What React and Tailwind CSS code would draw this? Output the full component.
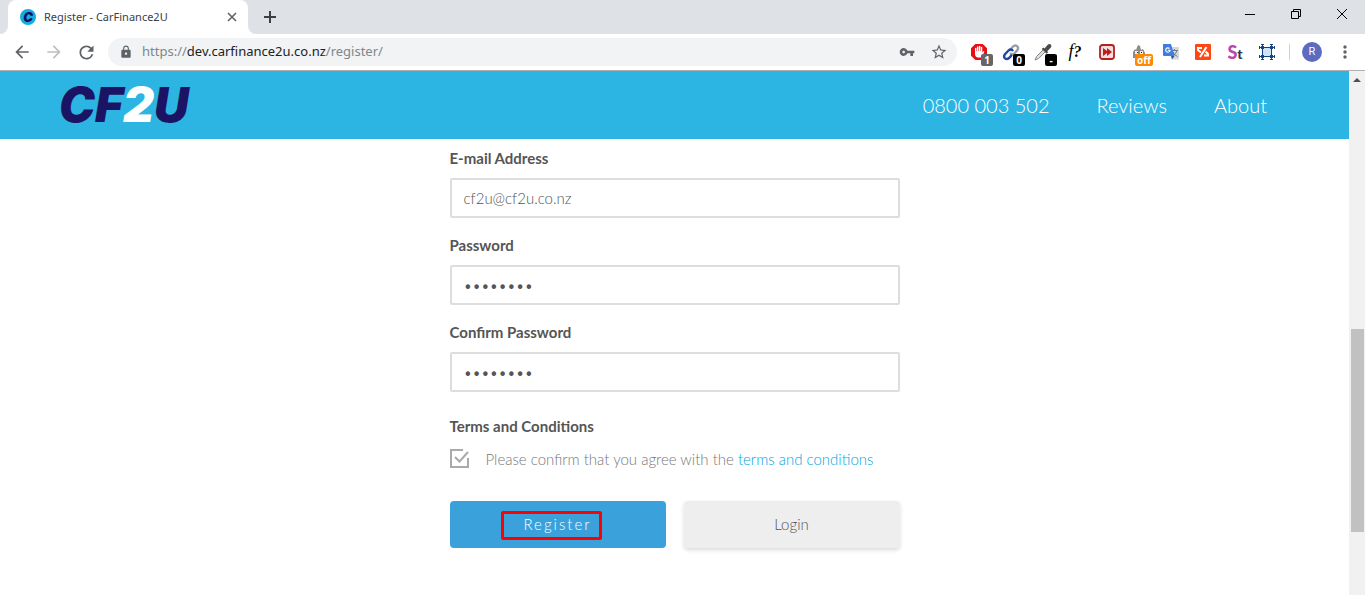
import React from "react";
import { MdArrowBack, MdArrowForward, MdRefresh, MdLock, MdVpnKey, MdStarBorder, MdMoreVert } from "react-icons/md";

function Badge({ className, children }) {
  return (
    <span className={"absolute right-[2px] bottom-0 flex h-3 items-center justify-center rounded-xs text-[10px] font-bold text-white " + className}>
      {children}
    </span>
  );
}

function ToolButton({ label, className = "text-[#5f6368]", children }) {
  return (
    <button type="button" aria-label={label} className={"relative flex h-7 w-8 shrink-0 items-center justify-center " + className}>
      {children}
    </button>
  );
}

function TabStrip() {
  return (
    <div className="flex h-[34px] items-center bg-[#dee1e6] pl-2">
      <div className="relative flex h-full w-60 items-center rounded-t-lg bg-white pr-2 pl-3">
        <svg viewBox="0 0 8 8" className="absolute bottom-0 -left-2 h-2 w-2" aria-hidden="true">
          <path d="M8 0v8H0a8 8 0 0 0 8-8z" fill="#fff" />
        </svg>
        <svg viewBox="0 0 8 8" className="absolute -right-2 bottom-0 h-2 w-2" aria-hidden="true">
          <path d="M0 0v8h8a8 8 0 0 1-8-8z" fill="#fff" />
        </svg>
        <span className="flex h-4 w-4 items-center justify-center rounded-full bg-[#12aee0] font-['Inter'] text-[13px] leading-none font-black text-[#160f5c] italic">
          C
        </span>
        <span className="ml-2 flex-1 text-[11px] whitespace-nowrap text-[#3c4043]">Register - CarFinance2U</span>
        <button type="button" aria-label="Close tab" className="flex h-4 w-4 items-center justify-center">
          <svg viewBox="0 0 10 10" className="h-[10px] w-[10px]" stroke="#5f6368" strokeWidth="1.6">
            <path d="M1 1l8 8M9 1l-8 8" />
          </svg>
        </button>
      </div>
      <button type="button" aria-label="New tab" className="ml-3 flex h-5 w-5 items-center justify-center">
        <svg viewBox="0 0 12 12" className="h-3 w-3" stroke="#3c4043" strokeWidth="2">
          <path d="M6 0v12M0 6h12" />
        </svg>
      </button>
      <div className="ml-auto flex h-7 self-start">
        <button type="button" aria-label="Minimise" className="flex w-[46px] items-center justify-center">
          <svg viewBox="0 0 10 10" className="h-[10px] w-[10px]" shapeRendering="crispEdges">
            <path d="M0 5h10v1H0z" fill="#000" />
          </svg>
        </button>
        <button type="button" aria-label="Restore" className="flex w-[46px] items-center justify-center">
          <svg viewBox="0 0 10 10" className="h-[10px] w-[10px]" fill="none" stroke="#000">
            <path d="M.5 2.500h7v7h-7zM2.500 2.500v-2h7v7h-2" />
          </svg>
        </button>
        <button type="button" aria-label="Close" className="flex w-[46px] items-center justify-center">
          <svg viewBox="0 0 10 10" className="h-[10px] w-[10px]" stroke="#000">
            <path d="M0 0l10 10M10 0L0 10" />
          </svg>
        </button>
      </div>
    </div>
  );
}

function Extensions() {
  return (
    <>
      <ToolButton label="Blocker">
        <svg viewBox="0 0 18 18" className="h-[18px] w-[18px]">
          <path d="M5.300 1h7.400L17 5.300v7.400L12.700 17H5.300L1 12.700V5.300z" fill="#e60f14" />
          <path d="M5 9.500V5.200q.8-.9 1.400 0V8h.5V3.700q.8-.9 1.500 0V8h.5V3.200q.8-.9 1.500 0V8h.5V4.200q.8-.9 1.400 0v5.300l1-1.200q1.200-.3 1.100.5l-2.200 4.400q-.5 1.200-1.700 1.200H7.700Q5 14 5 11z" fill="#fff" />
        </svg>
        <Badge className="w-3 bg-[#666]">1</Badge>
      </ToolButton>
      <ToolButton label="Links">
        <svg viewBox="0 0 18 18" className="h-[18px] w-[18px]" fill="none" strokeLinecap="round" strokeWidth="2.400">
          <path d="M8 7l3-3.500q2-2 4-.4t.4 3.900l-3 3.500q-1.800 1.600-3.600.3" stroke="#9a9ea5" />
          <path d="M10.500 7.300Q8.500 5.500 6.500 7.500l-3.700 4q-1.500 2.300.2 3.800t3.800 0l2.500-2.700" stroke="#2247a5" />
        </svg>
        <Badge className="w-3 bg-black">0</Badge>
      </ToolButton>
      <ToolButton label="Colour picker">
        <svg viewBox="0 0 18 18" className="h-[18px] w-[18px]">
          <path d="M10.500 5.500l3-3.500q1.800-1.700 3.200-.4t0 3.200l-3.500 3.400 1 1-1.600 1.500L7.700 6l1.600-1.500z" fill="#4b4b4b" />
          <path d="M9 7L2.500 13.500 1 17l3.600-1.500L11 9z" fill="#ddd" stroke="#888" />
        </svg>
        <Badge className="w-3 bg-black">-</Badge>
      </ToolButton>
      <ToolButton label="Font finder" className="text-black">
        <span className="font-['Liberation_Serif',serif] text-lg leading-none italic">
          f<span className="text-base font-bold">?</span>
        </span>
      </ToolButton>
      <ToolButton label="Fast forward">
        <svg viewBox="0 0 16 16" className="h-4 w-4">
          <rect x="1" y="1" width="14" height="14" rx="2.500" fill="#f7dedd" stroke="#b3201f" strokeWidth="1.800" />
          <path d="M4 4v8l4-3v3l5-4-5-4v3z" fill="#b3201f" />
        </svg>
      </ToolButton>
      <ToolButton label="Monkey scripts">
        <svg viewBox="0 0 16 16" className="h-4 w-4">
          <path d="M2 8l2-3 1 1 2-5 2 1 1 4 2-1 2 4v5H2z" fill="#8b8b8b" />
          <path d="M4 7h3v3H4zM9 7h3v3H9z" fill="#eee" />
          <path d="M6 8h1v1H6zM10 8h1v1h-1z" fill="#222" />
        </svg>
        <Badge className="w-[18px] bg-[#ff8a00]">off</Badge>
      </ToolButton>
      <ToolButton label="Translate">
        <svg viewBox="0 0 16 16" className="h-4 w-4">
          <path d="M6 3h10v12.500H9z" fill="#d8d8d8" />
          <path d="M8 6.500h7M11.500 5v1.500M14 6.500q-1 3.500-4 5.500M10 8q1 3 4.500 4.500" stroke="#6f7f88" fill="none" />
          <path d="M0 0h8l3.500 12H1q-1 0-1-1z" fill="#3f7de0" />
          <path d="M8 12h3.500L9 15.500z" fill="#2456b5" />
          <path d="M6.500 4.500a2.200 2.200 0 1 0 .6 1.800H4.800" fill="none" stroke="#fff" strokeWidth="1.100" />
        </svg>
      </ToolButton>
      <ToolButton label="Code tools">
        <svg viewBox="0 0 16 16" className="h-4 w-4" fill="none" stroke="#fff" strokeWidth="2">
          <rect width="16" height="16" rx="1" fill="#ff4713" stroke="none" />
          <path d="M7 4H3v2l3 2.500M11.500 3L5 13M10.500 7.500L13 10v1.500H9" />
        </svg>
      </ToolButton>
      <ToolButton label="Styles">
        <span className="flex items-baseline font-['Lato'] leading-none font-black">
          <span className="text-lg text-[#b845b0]">S</span>
          <span className="text-sm text-[#343440]">t</span>
        </span>
      </ToolButton>
      <ToolButton label="Frame">
        <svg viewBox="0 0 16 16" className="h-4 w-4" shapeRendering="crispEdges">
          <path d="M3 3h10v10H3z" fill="#cfe4fb" />
          <path d="M0 3h16v1H0zM0 12h16v1H0zM3 0h1v16H3zM12 0h1v16h-1z" fill="#14437f" />
          <path d="M2 2h3v3H2zM11 2h3v3h-3zM2 11h3v3H2zM11 11h3v3h-3zM0 2h1v3H0zM15 2h1v3h-1zM0 11h1v3H0zM15 11h1v3h-1zM2 0h3v1H2zM11 0h3v1h-3zM2 15h3v1H2zM11 15h3v1h-3z" fill="#14437f" />
        </svg>
      </ToolButton>
    </>
  );
}

function Toolbar() {
  return (
    <div className="flex h-[37px] items-center border-b border-[#b0b0b0] bg-white pr-[9px] pl-[6px]">
      <ToolButton label="Back"><MdArrowBack size={20} /></ToolButton>
      <ToolButton label="Forward" className="text-[#bdbfc2]"><MdArrowForward size={20} /></ToolButton>
      <ToolButton label="Reload"><MdRefresh size={21} /></ToolButton>
      <div className="mx-[6px] flex h-7 flex-1 items-center rounded-full bg-[#f1f3f4] pr-[2px] pl-[11px]">
        <MdLock size={14} className="text-[#5f6368]" />
        <a href="#register" className="ml-[9px] flex-1 text-[13px] whitespace-nowrap text-[#80868b]">
          https://<span className="text-[#202124]">dev.carfinance2u.co.nz</span>/register/
        </a>
        <ToolButton label="Saved passwords"><MdVpnKey size={16} /></ToolButton>
        <ToolButton label="Bookmark"><MdStarBorder size={18} /></ToolButton>
      </div>
      <Extensions />
      <span className="ml-[6px] h-4 w-px bg-[#cfd1d4]" />
      <button type="button" aria-label="Profile" className="flex w-11 items-center justify-center">
        <span className="flex h-5 w-5 items-center justify-center rounded-full bg-[#5c6bc0] font-['Roboto'] text-[11px] text-white">R</span>
      </button>
      <button type="button" aria-label="Menu" className="flex w-[22px] items-center justify-center text-[#5f6368]">
        <MdMoreVert size={20} className="shrink-0" />
      </button>
    </div>
  );
}

function SiteHeader() {
  return (
    <header className="flex h-[68px] items-center justify-between bg-[#2cb5e2] pr-[82px] pl-[59px]">
      <a href="#home" className="font-['Inter'] text-5xl leading-none font-black text-[#1b1464] italic">
        CF<span className="text-white">2</span>U
      </a>
      <nav className="flex gap-[47px] text-xl font-light text-white">
        <a href="tel:0800003502">0800 003 502</a>
        <a href="#reviews">Reviews</a>
        <a href="#about">About</a>
      </nav>
    </header>
  );
}

function Field({ id, label, ...input }) {
  return (
    <div className="flex flex-col gap-2">
      <label htmlFor={id} className="text-[15px] leading-6 font-bold text-[#555]">{label}</label>
      <input
        id={id}
        className="h-10 w-full rounded-xs border-2 border-[#ddd] bg-white px-3 text-[15px] font-light text-[#555] outline-none"
        {...input}
      />
    </div>
  );
}

function RegisterForm() {
  return (
    <form className="mx-auto w-[450px] pt-[7px]" onSubmit={(e) => e.preventDefault()}>
      <div className="flex flex-col gap-[15px]">
        <Field id="email" label="E-mail Address" type="email" defaultValue="cf2u@cf2u.co.nz" />
        <Field id="password" label="Password" type="password" defaultValue="carfin2u" />
        <Field id="confirm" label="Confirm Password" type="password" defaultValue="carfin2u" />
      </div>
      <fieldset className="mt-[22px]">
        <legend className="text-[15px] leading-6 font-bold text-[#555]">Terms and Conditions</legend>
        <div className="mt-[9px] flex items-center text-[15px] leading-6 font-light text-[#777]">
          <span className="relative mr-4 flex h-5 w-5 shrink-0">
            <input id="terms" type="checkbox" defaultChecked className="peer h-5 w-5 appearance-none" />
            <svg viewBox="0 0 20 20" className="pointer-events-none absolute inset-0 h-5 w-5" fill="none" stroke="#aaa" strokeWidth="2">
              <path d="M13 1H1v17h17V9" />
              <path d="M5 8l4.500 4.500L18 3" />
            </svg>
          </span>
          <label htmlFor="terms">
            Please confirm that you agree with the <a href="#terms" className="text-[#00a5dc]">terms and conditions</a>
          </label>
        </div>
      </fieldset>
      <div className="mt-[30px] grid grid-cols-2 gap-[18px] text-[15px] font-light">
        <button type="submit" className="relative h-[47px] rounded-sm bg-[#3ba1da] tracking-[2px] text-white">
          Register
          <span className="absolute top-[10px] left-[51px] h-[29px] w-[101px] rounded-xs border-3 border-[#f00]" />
        </button>
        <button type="button" className="h-[47px] rounded-sm bg-[#eee] text-[#555] shadow-[0_2px_4px_rgba(0,0,0,0.15)]">
          Login
        </button>
      </div>
    </form>
  );
}

function Scrollbar() {
  return (
    <div className="flex w-4 shrink-0 flex-col bg-[#f1f1f1]">
      <button type="button" aria-label="Scroll up" className="flex h-[17px] items-center justify-center">
        <svg viewBox="0 0 8 4" className="h-1 w-2"><path d="M4 0l4 4H0z" fill="#505050" /></svg>
      </button>
      <div className="flex-[241]" />
      <div className="mr-px ml-[2px] flex-[203] bg-[#c1c1c1]" />
      <div className="flex-[63]" />
    </div>
  );
}

export default function App() {
  return (
    <div className="flex min-h-screen flex-col bg-white">
      <div className="font-['Noto_Sans',sans-serif]">
        <TabStrip />
        <Toolbar />
      </div>
      <div className="flex flex-1 font-['Lato',sans-serif]">
        <main className="min-w-0 flex-1">
          <SiteHeader />
          <RegisterForm />
        </main>
        <Scrollbar />
      </div>
    </div>
  );
}
